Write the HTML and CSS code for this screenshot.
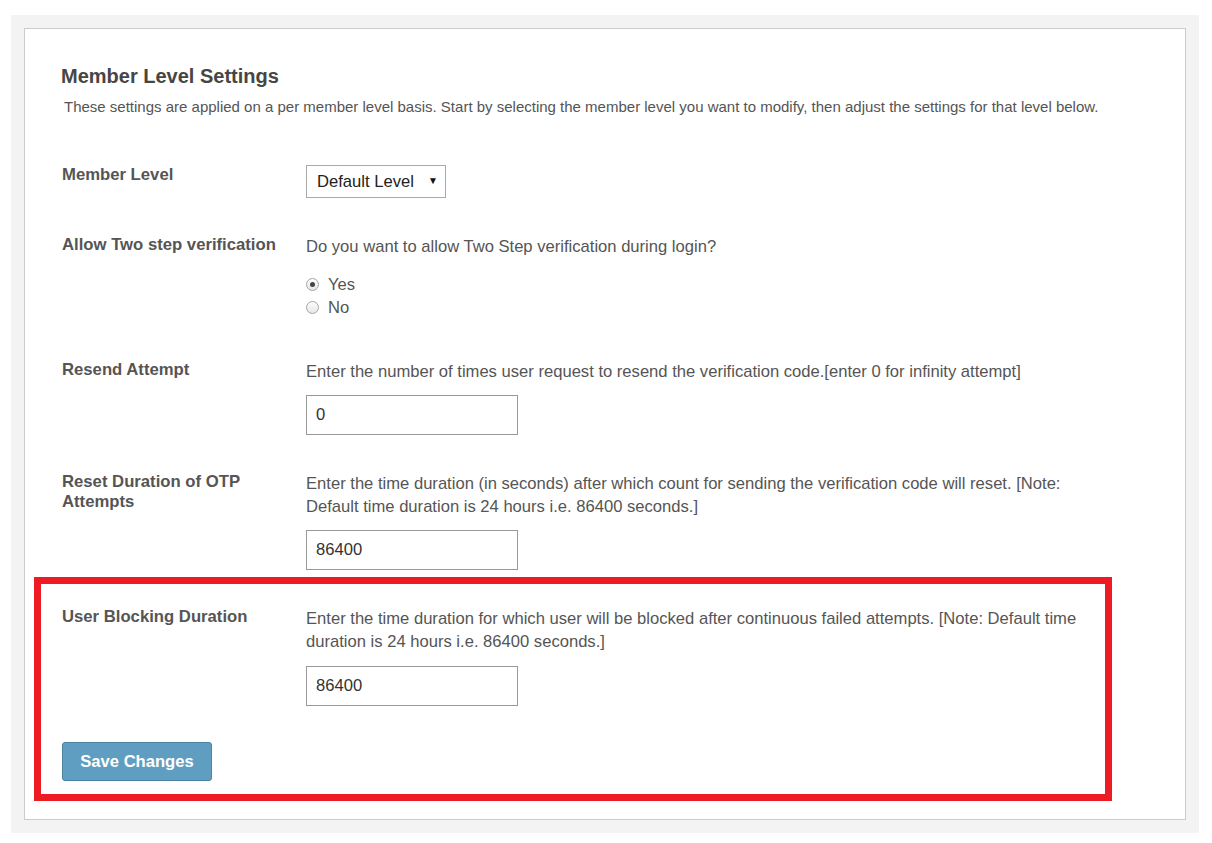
FILE: index.html
```html
<!DOCTYPE html>
<html lang="en">
<head>
    <meta charset="UTF-8">
    <meta name="viewport" content="width=device-width, initial-scale=1.0">
    <title>Member Level Settings</title>
    <link rel="stylesheet" href="styles.css">
</head>
<body>
    <div class="page">
        <div class="panel">
            <h2 class="panel-title">Member Level Settings</h2>
            <p class="panel-desc">These settings are applied on a per member level basis. Start by selecting the member level you want to modify, then adjust the settings for that level below.</p>

            <form class="settings-form">
                <div class="form-row">
                    <label class="row-label" for="memberLevel">Member Level</label>
                    <div class="row-field">
                        <span class="select-wrap">
                            <select id="memberLevel">
                                <option>Default Level</option>
                            </select>
                        </span>
                    </div>
                </div>

                <div class="form-row radios-row">
                    <span class="row-label">Allow Two step verification</span>
                    <div class="row-field">
                        <p class="field-text">Do you want to allow Two Step verification during login?</p>
                        <label class="radio"><input type="radio" name="twostep" checked> Yes</label>
                        <label class="radio"><input type="radio" name="twostep"> No</label>
                    </div>
                </div>

                <div class="form-row">
                    <label class="row-label" for="resend">Resend Attempt</label>
                    <div class="row-field">
                        <p class="field-text">Enter the number of times user request to resend the verification code.[enter 0 for infinity attempt]</p>
                        <input type="text" id="resend" class="text-input" value="0">
                    </div>
                </div>

                <div class="form-row">
                    <label class="row-label" for="resetDuration">Reset Duration of OTP Attempts</label>
                    <div class="row-field">
                        <p class="field-text">Enter the time duration (in seconds) after which count for sending the verification code will reset. [Note: Default time duration is 24 hours i.e. 86400 seconds.]</p>
                        <input type="text" id="resetDuration" class="text-input" value="86400">
                    </div>
                </div>

                <!-- highlighted block -->
                <div class="highlight">
                    <div class="form-row">
                        <label class="row-label" for="blockDuration">User Blocking Duration</label>
                        <div class="row-field">
                            <p class="field-text">Enter the time duration for which user will be blocked after continuous failed attempts. [Note: Default time duration is 24 hours i.e. 86400 seconds.]</p>
                            <input type="text" id="blockDuration" class="text-input" value="86400">
                        </div>
                    </div>

                    <button type="submit" class="save-btn">Save Changes</button>
                </div>
            </form>
        </div>
    </div>
</body>
</html>
```

FILE: styles.css
```css
* {
    margin: 0;
    padding: 0;
    box-sizing: border-box;
}

body {
    font-family: 'Liberation Sans', Arial, sans-serif;
    color: #555;
    background: #fff;
    margin: 15px 13px 0 11px;
}

.page {
    background: #f3f3f3;
    padding: 13px;
}

.panel {
    background: #fff;
    border: 1px solid #ccc;
    padding: 35px 80px 18px 37px;
}

.panel-title {
    font-size: 20px;
    line-height: 24px;
    font-weight: 700;
    color: #464646;
    margin-left: -1px;
}

.panel-desc {
    font-size: 15px;
    line-height: 20px;
    margin: 9px 0 0 2px;
}

.settings-form {
    margin-top: 48px;
}

.form-row {
    display: grid;
    grid-template-columns: 244px 1fr;
    margin-bottom: 37px;
}

.radios-row {
    margin-bottom: 41px;
}

.row-label {
    font-size: 16.7px;
    line-height: 20px;
    font-weight: 700;
    color: #555;
    padding-right: 20px;
}

.field-text {
    font-size: 16.6px;
    line-height: 23px;
    margin-bottom: 12px;
}

.radios-row .field-text {
    margin-bottom: 15px;
}

.radio {
    display: flex;
    align-items: center;
    font-size: 16.6px;
    line-height: 23px;
}

.radio input {
    appearance: none;
    width: 13px;
    height: 13px;
    border: 1px solid #a6a6a6;
    border-radius: 50%;
    background: linear-gradient(#fdfdfd, #e6e6e6);
    margin-right: 9px;
    display: grid;
    place-items: center;
}

.radio input:checked::after {
    content: "";
    width: 5px;
    height: 5px;
    border-radius: 50%;
    background: #444;
}

.select-wrap {
    position: relative;
    display: inline-block;
    vertical-align: top;
}

.select-wrap select {
    display: block;
    appearance: none;
    width: 140px;
    height: 33px;
    border: 1px solid #aaa;
    border-radius: 0;
    background: #fff;
    font-family: inherit;
    font-size: 16.6px;
    color: #222;
    padding-left: 10px;
}

.select-wrap::after {
    content: "\25BC";
    position: absolute;
    right: 8px;
    top: 10px;
    font-size: 10px;
    color: #111;
    pointer-events: none;
}

.text-input {
    display: block;
    width: 212px;
    height: 40px;
    border: 1px solid #999;
    font-family: inherit;
    font-size: 16.6px;
    color: #333;
    padding-left: 9px;
}

.highlight {
    border: 7px solid #ed1c24;
    margin: -30px -7px 0 -28px;
    padding: 23px 0 13px 21px;
}

.highlight .form-row {
    margin-bottom: 36px;
}

.highlight .field-text {
    margin-bottom: 13px;
}

.save-btn {
    width: 150px;
    height: 39px;
    background: #5f9ec0;
    border: 1px solid #4b83a2;
    border-radius: 3px;
    color: #fff;
    font-family: inherit;
    font-size: 16.6px;
    font-weight: 700;
    cursor: pointer;
}
```
